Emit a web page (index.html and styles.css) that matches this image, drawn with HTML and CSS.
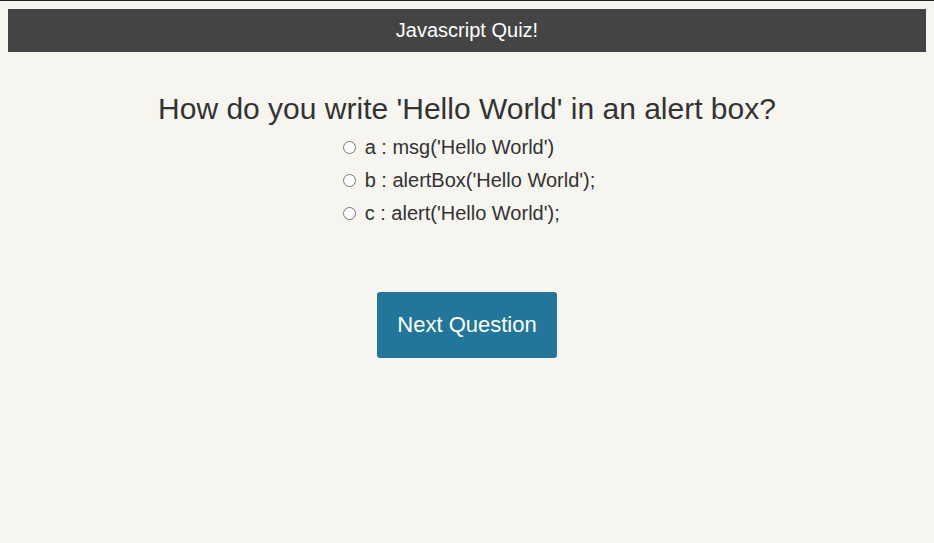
FILE: index.html
```html
<!DOCTYPE html>
<html>
<head>
<meta charset="utf-8">
<link rel="stylesheet" href="styles.css">
</head>
<body>
<header class="topbar">Javascript Quiz!</header>
<main class="quiz">
  <h2 class="question">How do you write 'Hello World' in an alert box?</h2>
  <div class="options">
    <label class="option"><input type="radio" name="q"> a : msg('Hello World')</label>
    <label class="option"><input type="radio" name="q"> b : alertBox('Hello World');</label>
    <label class="option"><input type="radio" name="q"> c : alert('Hello World');</label>
  </div>
  <button class="next">Next Question</button>
</main>
</body>
</html>
```
FILE: styles.css
```css
html { background: #f6f5f0; border-top: 1px solid #222; }
body {
  margin: 8px;
  font-family: "Liberation Sans", Arial, sans-serif;
  color: #333;
}
.topbar {
  background: #444;
  color: #fff;
  text-align: center;
  font-size: 20px;
  height: 43px;
  line-height: 43px;
}
.quiz {
  display: flex;
  flex-direction: column;
  align-items: center;
}
.question {
  font-weight: normal;
  font-size: 30px;
  margin: 39px 0 0;
  line-height: 36px;
}
.options {
  display: flex;
  flex-direction: column;
  align-items: flex-start;
  margin-top: 4px;
  padding-left: 4px;
}
.option {
  font-size: 20px;
  height: 33px;
  line-height: 33px;
  display: flex;
  align-items: center;
}
.option input {
  margin: 0 9px 0 0;
  width: 13px;
  height: 13px;
}
.next {
  margin-top: 62px;
  width: 180px;
  height: 66px;
  background: #217699;
  color: #fff;
  border: none;
  border-radius: 3px;
  font-family: "Liberation Sans", Arial, sans-serif;
  font-size: 22px;
}
```
